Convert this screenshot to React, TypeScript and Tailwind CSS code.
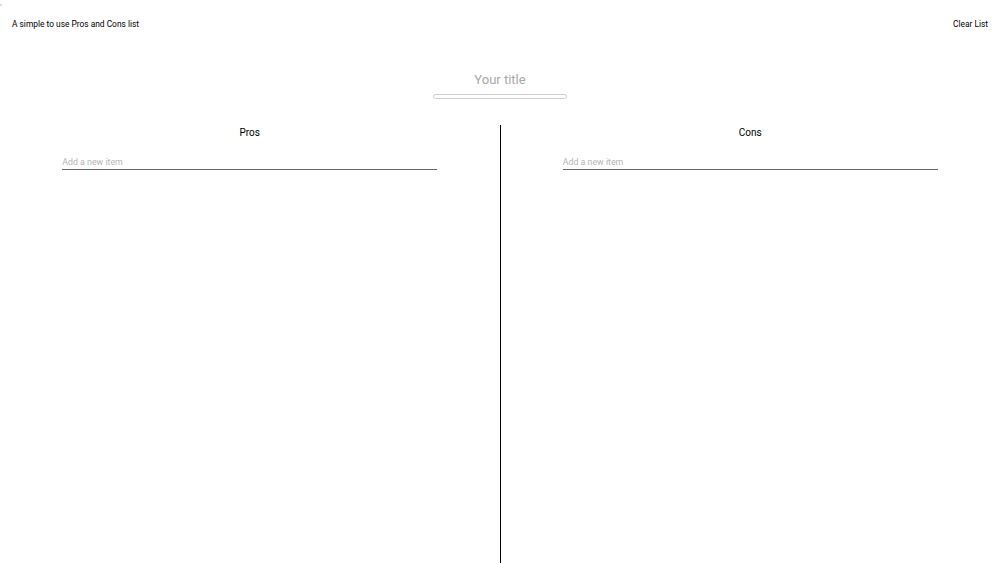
export default function App() {
  return (
    <div className="h-[563px] overflow-hidden bg-white font-['Roboto',sans-serif] text-black relative">
      <span className="absolute left-0 top-0 text-[6px] leading-[8px] text-gray-500">›</span>

      {/* Header */}
      <header className="flex h-12 items-center justify-between px-3 text-[8.4px]">
        <span>A simple to use Pros and Cons list</span>
        <button className="cursor-pointer">Clear List</button>
      </header>

      {/* Title */}
      <div className="flex flex-col items-center pt-[22px]">
        <input
          placeholder="Your title"
          className="w-[300px] text-center text-[13px] leading-5 outline-none placeholder:text-[#a9a9a9]"
        />
        <div className="mt-[4px] h-[5px] w-[134px] rounded-full border border-[#cfcfcf]" />
      </div>

      {/* Columns */}
      <div className="mt-[26px] grid h-[438px] grid-cols-[1fr_1px_1fr]">
        <Column title="Pros" />
        <div className="bg-black" />
        <Column title="Cons" />
      </div>
    </div>
  );
}

function Column({ title }: { title: string }) {
  return (
    <div className="flex flex-col items-center pt-[2px]">
      <h2 className="text-[10px] leading-3">{title}</h2>
      <input
        placeholder="Add a new item"
        className="mt-[18px] w-[375px] border-b border-[#666] pb-[1px] text-[8.8px] leading-[11px] outline-none placeholder:text-[#b5b5b5]"
      />
    </div>
  );
}
